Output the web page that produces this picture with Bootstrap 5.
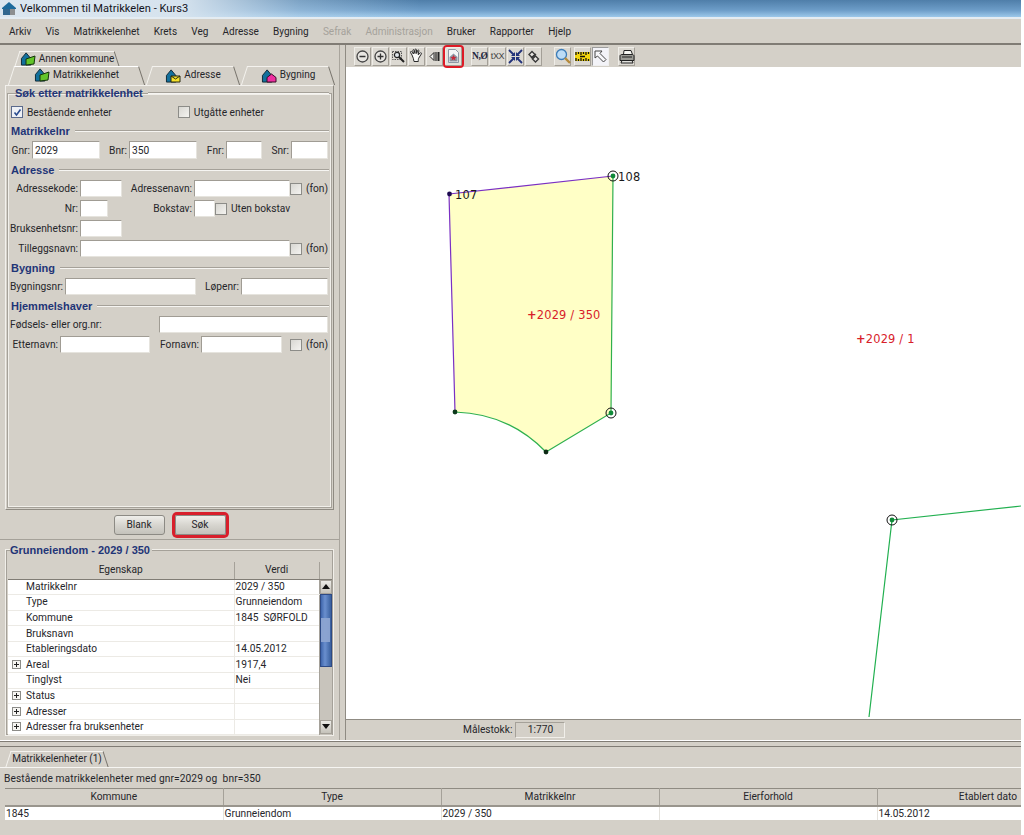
<!DOCTYPE html>
<html lang="no">
<head>
<meta charset="utf-8">
<title>Velkommen til Matrikkelen - Kurs3</title>
<link href="https://cdn.jsdelivr.net/npm/bootstrap@5.3.0/dist/css/bootstrap.min.css" rel="stylesheet">
<style>
  :root { --win: #d4d0c8; --edge: #8f8b83; --head: #1f3577; }
  html, body { height: 100%; margin: 0; background: #fff; overflow: hidden; }
  body { font-family: Roboto, "Liberation Sans", sans-serif; font-size: 10.2px; line-height: 14px; color: #26262a; }
  .app { width: 1021px; height: 835px; background: var(--win); overflow: hidden; }

  .titlebar { height: 19px; padding-left: 2px; font-size: 11.1px; color: #14141c;
    background: linear-gradient(90deg, #dbe6ef 0, #d6e3ee 180px, rgba(190,215,235,.4) 300px, rgba(130,170,205,0) 420px),
                linear-gradient(180deg, #4f7ea9, #6d9dc8 60%, #9cc8ea); border-bottom: 2px solid #e4ecf2; }
  .menubar { height: 26px; padding-left: 9px; gap: 14.2px; border-bottom: 2px solid #807c75; padding-top: 1px; font-size: 10px; }
  .menubar .off { color: #a5a29b; }

  .mainrow { height: 695px; }
  .leftcol { width: 340px; flex: none; padding-top: 5px; border-right: 1px solid #a9a59d; }
  .rightcol { margin-left: 5px; border-left: 1px solid #8f8b83; min-width: 0; }

  .tabrow1 { height: 16px; padding-left: 17px; padding-top: 1px; }
  .tabrow2 { height: 19px; padding-left: 11px; }
  .wintab { position: relative; gap: 3px; justify-content: center; font-size: 10px; }
  .wintab > * { position: relative; z-index: 1; }
  .wintab::before, .wintab::after { content: ""; position: absolute; top: 0; bottom: 0; width: 55%; border-top: 1px solid #f4f2ee; }
  .wintab::before { left: 0; border-left: 1px solid #f4f2ee; transform: skewX(-18deg); }
  .wintab::after { right: 0; border-right: 1px solid #77736c; transform: skewX(18deg); }
  .tab-a { width: 100px; }
  .tab-b { width: 131px; padding-bottom: 2px; }
  .tab-c { width: 88px; margin-left: 7px; padding-bottom: 1px; }
  .tab-b::before, .tab-b::after { background: var(--win); border-top-color: #fff; }

  .pane { height: 425px; margin-left: 5px; width: 329px; border: 1px solid #f2f0ec; border-right-color: #8f8b83; border-bottom-color: #8f8b83; padding: 7px 1px 1px; }
  .gframe { border: 1px solid #a5a199; box-shadow: 0 0 0 1px #f1efea inset; height: 100%; padding: 0 2px; }
  .secthead { height: 14px; margin-top: 4px; gap: 5px; padding-left: 1px; font: bold 11px/14px "Liberation Sans", sans-serif; color: var(--head); }
  .secthead.first { margin-top: -8px; padding-left: 5px; }
  .sectline { flex: 1; height: 2px; border-top: 1px solid #a5a199; border-bottom: 1px solid #f6f5f2; }
  .frow { height: 17px; margin-top: 3px; }
  .frow.tall { height: 18px; }
  .frow.chk { height: 16px; margin-top: 4px; }
  .flabel { text-align: right; padding: 1px 2px 0 0; margin: 0; white-space: nowrap; }
  .flabel.lft { text-align: left; }
  .finput { height: 100%; background: #fff; border: 1px solid #a09c94; border-right-color: #e6e4de; border-bottom-color: #e6e4de; padding: 1px 2px 0; line-height: 15px; }
  .cbx { width: 12px; height: 12px; flex: none; border: 1px solid #8c8c88; background: linear-gradient(135deg, #d8d7d2, #f4f3f0); }
  .cbx.on { position: relative; background: #eef1f6; border-color: #5a6a8c; }
  .fon { margin-left: 4px; padding-top: 1px; }
  .cbx-text { margin-left: 4px; padding-top: 1px; }
  .wd-2 { width: 2px; flex: none; } .wd-8 { width: 8px; flex: none; } .wd-11 { width: 11px; flex: none; }
  .wd-21 { width: 21px; } .wd-22 { width: 22px; } .wd-28 { width: 28px; } .wd-29 { width: 29px; }
  .wd-36 { width: 36px; } .wd-37 { width: 37px; } .wd-42 { width: 42px; } .wd-45 { width: 45px; }
  .wd-50 { width: 50px; } .wd-51 { width: 51px; } .wd-55 { width: 55px; } .wd-68 { width: 68px; }
  .wd-70 { width: 70px; } .wd-72 { width: 72px; } .wd-81 { width: 81px; } .wd-86 { width: 86px; }
  .wd-87 { width: 87px; } .wd-90 { width: 90px; } .wd-96 { width: 96px; } .wd-131 { width: 131px; }
  .wd-149 { width: 149px; } .wd-169 { width: 169px; } .wd-210 { width: 210px; }
  .chk-1 { margin-left: 1px; }
  .chk-2 { margin-left: 66px; }

  .btnbar { height: 30px; gap: 10px; border-bottom: 1px solid #a5a199; }
  .winbtn { width: 51px; height: 20px; padding: 0; font-size: 10.2px; line-height: 16px; color: #26262a; border: 1px solid #8c8a84; border-radius: 3px;
    background: linear-gradient(180deg, #efeeea, #d7d5cf 50%, #c4c2bb); }
  .winbtn.hit { box-shadow: 0 0 0 3px #d81f2b; outline: 0; border-radius: 2px; }

  .dpanel { margin: 9px 0 0 5px; width: 329px; height: 187px; border: 1px solid #f1efea; padding: 0 2px; box-shadow: 0 0 0 1px #a5a199 inset; }
  .dhead { height: 14px; margin-top: -7px; padding-left: 2px; font: bold 11px/14px "Liberation Sans", sans-serif; color: var(--head); }
  .dhead span { background: var(--win); padding-right: 2px; }
  .dtbl { margin: 5px 0 0; width: 324px; table-layout: fixed; border-collapse: collapse; --bs-table-bg: #fff; --bs-table-color: #26262a; }
  .table.dtbl > :not(caption) > * > * { padding: 0 1px; border: 0; font-size: 10.2px; line-height: 14px; white-space: nowrap; box-shadow: none; vertical-align: middle; }
  .table.dtbl > thead > tr > th { height: 17px; font-weight: 400; text-align: center; background: var(--win); border-right: 1px solid #a5a199; border-bottom: 1px solid #807c75; }
  .table.dtbl > thead > tr > th:last-child { border-right: 0; }
  .table.dtbl > tbody > tr > td { height: 15.6px; border-bottom: 1px solid #eceae5; }
  .table.dtbl > tbody > tr > td.namecell { padding-left: 18px; border-right: 1px solid #eceae5; }
  .table.dtbl > tbody > tr > td.sbcell { padding: 0; background: #c8c4bc; border-bottom: 0; border-left: 1px solid #a5a199; vertical-align: top; }
  .col-e { width: 226px; } .col-v { width: 85px; } .col-s { width: 13px; }
  .expander { display: inline-block; position: relative; width: 9px; height: 9px; margin: 0 5px 0 -14px; border: 1px solid #8c8c88; background: #f6f5f2; vertical-align: -1px; }
  .expander::before { content: ""; position: absolute; left: 1px; right: 1px; top: 3px; height: 1px; background: #222; }
  .expander::after { content: ""; position: absolute; top: 1px; bottom: 1px; left: 3px; width: 1px; background: #222; }
  .sbar { height: 154px; }
  .sbtn { height: 14px; flex: none; background: linear-gradient(180deg, #ecebe7, #c5c2ba); border: 1px solid #a5a199; }
  .sbtn svg { display: block; margin: 3px auto 0; }
  .sthumb { height: 73px; flex: none; background: linear-gradient(90deg, #3f66ac, #6a8fce 40%, #39609f); border: 1px solid #2d4a85; }
  .sgrip { width: 9px; height: 24px; background-image: radial-gradient(#8ea6d2 .7px, transparent .8px); background-size: 2px 2px; }

  .toolstrip { height: 22px; flex: none; padding-left: 8px; }
  .tbtn { width: 17px; height: 19px; flex: none; margin-right: 1px; padding: 0; border: 1px solid; border-color: #efede8 #a39f97 #a39f97 #efede8; border-radius: 0; background: #dcd9d2; font-family: "Liberation Serif", serif; color: #22253c; line-height: 16px; }
  .tbtn svg { display: block; margin: 0 auto; }
  .tbtn.hit { position: relative; margin: 0 1px; background: #e4e2dc; box-shadow: 0 0 0 2px #dd1a26; border-radius: 2px; z-index: 1; }
  .tbtn.pressed { background: #f3f3f8; border-color: #9c9c9c #efefef #efefef #9c9c9c; }
  .tsep { width: 8px; flex: none; }
  .txt-no { font-size: 9.5px; font-weight: 700; letter-spacing: -.4px; }
  .txt-xx { font: 9px/16px "Liberation Sans", sans-serif; letter-spacing: -.4px; color: #444; }

  .mapview { flex: 1; background: #fff; min-height: 0; }
  .mapview svg { display: block; }
  .mapnum { font: 11.4px "DejaVu Sans", sans-serif; fill: #1a1a1a; letter-spacing: .2px; }
  .mapred { font: 11.4px "DejaVu Sans", sans-serif; fill: #d8202a; letter-spacing: .2px; }
  .mapplus { font-weight: 700; }
  .statusbar { height: 21px; flex: none; border-top: 1px solid #8f8b83; padding-left: 117px; gap: 3px; }
  .scalebox { width: 50px; height: 16px; text-align: center; border: 1px solid #a5a199; border-right-color: #f1efea; border-bottom-color: #f1efea; }

  .bottompanel { height: 95px; border-top: 1px solid #fff; }
  .bottomrules { height: 6px; border-top: 1px solid #807c75; border-bottom: 1px solid #807c75; }
  .tabbase { height: 17px; margin-top: 4px; padding-left: 8px; border-bottom: 1px solid #f6f5f2; }
  .tab-d { width: 98px; }
  .resulttext { height: 14px; margin: 4px 0 2px 4px; letter-spacing: .1px; }
  .rtbl { margin: 0 0 0 5px; width: 1016px; table-layout: fixed; border-collapse: collapse; --bs-table-bg: #fff; --bs-table-color: #26262a; }
  .table.rtbl > :not(caption) > * > * { padding: 0 1px; border: 0; font-size: 10.2px; line-height: 13px; box-shadow: none; vertical-align: middle; }
  .table.rtbl > thead > tr > th { height: 17px; font-weight: 400; text-align: center; background: var(--win); border-top: 1px solid #8f8b83; border-right: 1px solid #a5a199; border-bottom: 2px solid #99958d; }
  .table.rtbl > thead > tr > th:last-child { border-right: 0; text-align: right; padding-right: 4px; }
  .table.rtbl > tbody > tr > td { height: 14px; border-right: 1px solid #e4e2dd; }
  .col-r1 { width: 218px; } .col-r5 { width: 144px; }
</style>
</head>
<body>

<svg width="0" height="0" class="d-block">
  <defs>
    <symbol id="house" viewBox="0 0 16 16">
      <path d="M1 8 6 2l5 6v7H1z" fill="#12709c" stroke="#0c2432" stroke-width="1"/>
    </symbol>
  </defs>
</svg>

<div class="app d-flex flex-column">

  <div class="titlebar d-flex align-items-center gap-1">
    <svg width="14" height="15" viewBox="0 0 14 15"><path d="M0 7 7 1l7 6v1H0z" fill="#1c6a9c"/><path d="M1 8h12v6H1z" fill="#31678f"/><path d="M8 8h5v6H8z" fill="#8d8f90"/></svg>
    <span>Velkommen til Matrikkelen - Kurs3</span>
  </div>

  <nav class="menubar d-flex align-items-center">
    <span>Arkiv</span><span>Vis</span><span>Matrikkelenhet</span><span>Krets</span><span>Veg</span><span>Adresse</span><span>Bygning</span><span class="off">Sefrak</span><span class="off">Administrasjon</span><span>Bruker</span><span>Rapporter</span><span>Hjelp</span>
  </nav>

  <div class="mainrow d-flex">
    <div class="leftcol d-flex flex-column">

      <div class="tabrow1 d-flex">
        <div class="wintab tab-a d-flex align-items-center">
          <svg width="16" height="15" viewBox="0 0 16 15"><use href="#house"/><path d="m6 8 9-3-1 8-8 1z" fill="#63c52a" stroke="#14340a"/></svg>
          <span>Annen kommune</span>
        </div>
      </div>
      <div class="tabrow2 d-flex">
        <div class="wintab tab-b d-flex align-items-center">
          <svg width="16" height="15" viewBox="0 0 16 15"><use href="#house"/><path d="m6 8 9-3-1 8-8 1z" fill="#63c52a" stroke="#14340a"/></svg>
          <span>Matrikkelenhet</span>
        </div>
        <div class="wintab tab-c d-flex align-items-center">
          <svg width="16" height="15" viewBox="0 0 16 15"><use href="#house"/><path d="M6 8h9v6H6z" fill="#f5e12a" stroke="#2b2b10"/><path d="m6 8 4.500 3L15 8" fill="none" stroke="#2b2b10"/></svg>
          <span>Adresse</span>
        </div>
        <div class="wintab tab-c d-flex align-items-center">
          <svg width="16" height="15" viewBox="0 0 16 15"><use href="#house"/><path d="M6 14V9.500L10.500 6 15 9.500V14z" fill="#ee2fa0" stroke="#3b0a26"/></svg>
          <span>Bygning</span>
        </div>
      </div>

      <div class="pane">
        <div class="gframe">
          <div class="secthead first d-flex align-items-center"><span>Søk etter matrikkelenhet</span><i class="sectline"></i></div>
          <div class="frow chk d-flex align-items-center">
            <span class="cbx on chk-1 d-flex align-items-center justify-content-center"><svg width="9" height="9" viewBox="0 0 9 9"><path d="m1.500 4.500 2 2.500 4-5.500" fill="none" stroke="#2a4c8f" stroke-width="1.600"/></svg></span>
            <span class="cbx-text">Bestående enheter</span>
            <span class="cbx chk-2"></span>
            <span class="cbx-text">Utgåtte enheter</span>
          </div>

          <div class="secthead d-flex align-items-center"><span>Matrikkelnr</span><i class="sectline"></i></div>
          <div class="frow tall d-flex align-items-center">
            <label class="flabel wd-22">Gnr:</label><div class="finput wd-68">2029</div>
            <label class="flabel wd-29">Bnr:</label><div class="finput wd-68">350</div>
            <label class="flabel wd-29">Fnr:</label><div class="finput wd-36"></div>
            <label class="flabel wd-29">Snr:</label><div class="finput wd-37"></div>
          </div>

          <div class="secthead d-flex align-items-center"><span>Adresse</span><i class="sectline"></i></div>
          <div class="frow d-flex align-items-center">
            <label class="flabel wd-70">Adressekode:</label><div class="finput wd-42"></div>
            <label class="flabel wd-72">Adressenavn:</label><div class="finput wd-96"></div>
            <span class="cbx"></span><span class="fon">(fon)</span>
          </div>
          <div class="frow d-flex align-items-center">
            <label class="flabel wd-70">Nr:</label><div class="finput wd-28"></div>
            <label class="flabel wd-86">Bokstav:</label><div class="finput wd-21"></div>
            <span class="cbx"></span><span class="cbx-text">Uten bokstav</span>
          </div>
          <div class="frow d-flex align-items-center">
            <label class="flabel wd-70">Bruksenhetsnr:</label><div class="finput wd-42"></div>
          </div>
          <div class="frow d-flex align-items-center">
            <label class="flabel wd-70">Tilleggsnavn:</label><div class="finput wd-210"></div>
            <span class="cbx"></span><span class="fon">(fon)</span>
          </div>

          <div class="secthead d-flex align-items-center"><span>Bygning</span><i class="sectline"></i></div>
          <div class="frow d-flex align-items-center">
            <label class="flabel wd-55">Bygningsnr:</label><div class="finput wd-131"></div>
            <label class="flabel wd-45">Løpenr:</label><div class="finput wd-87"></div>
          </div>

          <div class="secthead d-flex align-items-center"><span>Hjemmelshaver</span><i class="sectline"></i></div>
          <div class="frow d-flex align-items-center">
            <label class="flabel lft wd-149">Fødsels- eller org.nr:</label><div class="finput wd-169"></div>
          </div>
          <div class="frow d-flex align-items-center">
            <label class="flabel wd-50">Etternavn:</label><div class="finput wd-90"></div>
            <label class="flabel wd-51">Fornavn:</label><div class="finput wd-81"></div>
            <i class="wd-8"></i><span class="cbx"></span><span class="fon">(fon)</span>
          </div>
        </div>
      </div>

      <div class="btnbar d-flex align-items-center justify-content-center">
        <button type="button" class="btn winbtn">Blank</button>
        <button type="button" class="btn winbtn hit">Søk</button>
      </div>

      <div class="dpanel">
        <div class="dhead"><span>Grunneiendom - 2029 / 350</span></div>
        <table class="table dtbl">
          <colgroup><col class="col-e"><col class="col-v"><col class="col-s"></colgroup>
          <thead><tr><th>Egenskap</th><th>Verdi</th><th></th></tr></thead>
          <tbody>
            <tr><td class="namecell">Matrikkelnr</td><td>2029 / 350</td>
              <td class="sbcell" rowspan="10">
                <div class="sbar d-flex flex-column">
                  <div class="sbtn"><svg width="8" height="5" viewBox="0 0 8 5"><path d="M0 5 4 0l4 5z" fill="#111"/></svg></div>
                  <div class="sthumb d-flex align-items-center justify-content-center"><div class="sgrip"></div></div>
                  <div class="flex-grow-1"></div>
                  <div class="sbtn"><svg width="8" height="5" viewBox="0 0 8 5"><path d="M0 0h8L4 5z" fill="#111"/></svg></div>
                </div>
              </td></tr>
            <tr><td class="namecell">Type</td><td>Grunneiendom</td></tr>
            <tr><td class="namecell">Kommune</td><td>1845&nbsp; SØRFOLD</td></tr>
            <tr><td class="namecell">Bruksnavn</td><td></td></tr>
            <tr><td class="namecell">Etableringsdato</td><td>14.05.2012</td></tr>
            <tr><td class="namecell"><span class="expander"></span>Areal</td><td>1917,4</td></tr>
            <tr><td class="namecell">Tinglyst</td><td>Nei</td></tr>
            <tr><td class="namecell"><span class="expander"></span>Status</td><td></td></tr>
            <tr><td class="namecell"><span class="expander"></span>Adresser</td><td></td></tr>
            <tr><td class="namecell"><span class="expander"></span>Adresser fra bruksenheter</td><td></td></tr>
          </tbody>
        </table>
      </div>
    </div>

    <div class="rightcol flex-grow-1 d-flex flex-column">
      <div class="toolstrip d-flex align-items-center">
        <button type="button" class="btn tbtn"><svg width="15" height="15" viewBox="0 0 15 15"><circle cx="7.500" cy="7.500" r="5.500" fill="#e8e6e2" stroke="#454545" stroke-width="1.300"/><path d="M4.500 7.500h6" stroke="#333" stroke-width="1.500"/></svg></button>
        <button type="button" class="btn tbtn"><svg width="15" height="15" viewBox="0 0 15 15"><circle cx="7.500" cy="7.500" r="5.500" fill="#e8e6e2" stroke="#454545" stroke-width="1.300"/><path d="M4.500 7.500h6M7.500 4.500v6" stroke="#333" stroke-width="1.300"/></svg></button>
        <button type="button" class="btn tbtn"><svg width="15" height="15" viewBox="0 0 15 15"><path d="M1.500 2.500h9v8h-9z" fill="none" stroke="#555" stroke-dasharray="1.500 1"/><circle cx="6" cy="6" r="2.600" fill="#dfe5ea" stroke="#222" stroke-width="1.200"/><path d="m8 8 5 5" stroke="#222" stroke-width="2"/></svg></button>
        <button type="button" class="btn tbtn"><svg width="15" height="16" viewBox="0 0 15 16"><path d="M3 7 1.500 4.500c-.5-1 .8-1.500 1.300-.7L4.500 6 3.800 2.500c-.2-1 1.200-1.200 1.400-.2L6 5.500V1.800c0-1 1.400-1 1.400 0l.3 3.700.9-3c.3-1 1.500-.6 1.300.3L9.200 6.800l2-1.800c.8-.7 1.800.2 1.100 1L9.800 10c-.5 1-.5 1.800-.5 3.500H5c-.2-2.500-1-4-2-6.500z" fill="#fbfbfa" stroke="#2a2a2a"/></svg></button>
        <button type="button" class="btn tbtn"><svg width="15" height="15" viewBox="0 0 15 15"><path d="M7 3.500 3 7.500l4 4z" fill="#f4f4f0" stroke="#222"/><path d="M9 3v9" stroke="#222" stroke-width="1.200"/><path d="M11.500 3v9" stroke="#222" stroke-width="2"/></svg></button>
        <button type="button" class="btn tbtn hit"><svg width="15" height="16" viewBox="0 0 15 16"><path d="M2.500 1.500h7l3 3v10h-10z" fill="#f4f5f7" stroke="#8d97a5"/><path d="M3.500 9 7.500 5.500l4 3.500v4.500h-8z" fill="#8c95a3"/><path d="m7.500 7 1 2h2l-1.600 1.400.6 2.100-2-1.200-2 1.200.6-2.100L4.500 9h2z" fill="#c9283a"/></svg></button>
        <i class="tsep"></i>
        <button type="button" class="btn tbtn txt-no">N,Ø</button>
        <button type="button" class="btn tbtn txt-xx">tXX</button>
        <button type="button" class="btn tbtn"><svg width="15" height="15" viewBox="0 0 15 15"><path d="M1 1l5 5M14 1 9 6M1 14l5-5M14 14 9 9" stroke="#22327a" stroke-width="1.800"/><path d="M7 7V3L3 7zM8 7V3l4 4zM7 8v4L3 8zM8 8v4l4-4z" fill="#22327a"/></svg></button>
        <button type="button" class="btn tbtn"><svg width="15" height="15" viewBox="0 0 15 15"><path d="M3 5.500 6 2.500l3 3-3 3zM6.500 10 9.500 7l3 3-3 3z" fill="#e8e6e2" stroke="#3a3a3a" stroke-width="1.400"/><path d="m5 9 5-4" stroke="#3a3a3a" stroke-width="1.400"/></svg></button>
        <i class="wd-11"></i>
        <button type="button" class="btn tbtn"><svg width="16" height="16" viewBox="0 0 16 16"><circle cx="6.500" cy="6.500" r="5" fill="#bcdcf6" stroke="#3c7cb8" stroke-width="1.300"/><path d="m10 10 5 5" stroke="#b58a3c" stroke-width="2.400"/></svg></button>
        <i class="wd-2"></i>
        <button type="button" class="btn tbtn"><svg width="15" height="15" viewBox="0 0 15 15"><path d="M0 3h15v9H0z" fill="#f2d50f"/><path d="M1 3v3M3.500 3v2M6 3v3M8.500 3v2M11 3v3M13.500 3v2M1 12V9M3.500 12v-2M6 12V9M8.500 12v-2M11 12V9M13.500 12v-2M5 7.500h5" stroke="#111" stroke-width="1.300"/></svg></button>
        <button type="button" class="btn tbtn pressed"><svg width="15" height="15" viewBox="0 0 15 15"><path d="M2 2h7L7 4.500l6 6-2.500 2.500-6-6L2 9z" fill="#f7f7fa" stroke="#444"/></svg></button>
        <i class="tsep"></i>
        <button type="button" class="btn tbtn"><svg width="16" height="15" viewBox="0 0 16 15"><path d="M5 1.500h7l1.500 4h-9z" fill="#f6f6f2" stroke="#222"/><path d="M1 7c0-1 1-1.500 2-1.500h10c1 0 2 .5 2 1.500v4.500H1z" fill="#9a9a94" stroke="#222"/><path d="M3 11.500h10l1 2.500H2z" fill="#e2e2de" stroke="#222"/><path d="M3 8h10" stroke="#222"/></svg></button>
      </div>

      <div class="mapview">
        <svg width="675" height="650" viewBox="346 67 675 650">
          <path d="M449 194 613 176 611 413 546 452C520 425 490 413 455 412Z" fill="#ffffc6"/>
          <path d="M449 194 613 176M449 194 455 412" fill="none" stroke="#7a2fc4" stroke-width="1.200"/>
          <path d="M613 176 611 413 546 452C520 425 490 413 455 412" fill="none" stroke="#2fb04e" stroke-width="1.200"/>
          <path d="M1021 506 892 520 869 717" fill="none" stroke="#22b050" stroke-width="1.200"/>
          <circle cx="449.500" cy="194" r="2.400" fill="#1c0a50"/>
          <circle cx="455" cy="412" r="2.400" fill="#0d3a1c"/>
          <circle cx="546" cy="452" r="2.400" fill="#0d2a14"/>
          <g fill="none" stroke="#111">
            <circle cx="613" cy="176" r="5"/>
            <circle cx="611" cy="413" r="5"/>
            <circle cx="892" cy="520" r="5"/>
          </g>
          <circle cx="613" cy="176" r="2.400" fill="#118a3a"/>
          <circle cx="611" cy="413" r="2.400" fill="#118a3a"/>
          <circle cx="892" cy="520" r="2.400" fill="#118a3a"/>
          <text class="mapnum" x="455" y="199">107</text>
          <text class="mapnum" x="618" y="181">108</text>
          <text class="mapred" x="527" y="319"><tspan class="mapplus">+</tspan>2029 / 350</text>
          <text class="mapred" x="856" y="343"><tspan class="mapplus">+</tspan>2029 / 1</text>
        </svg>
      </div>

      <div class="statusbar d-flex align-items-center">
        <span>Målestokk:</span>
        <div class="scalebox">1:770</div>
      </div>
    </div>
  </div>

  <div class="bottompanel">
    <div class="bottomrules"></div>
    <div class="tabbase d-flex">
      <div class="wintab tab-d d-flex align-items-center"><span>Matrikkelenheter (1)</span></div>
    </div>
    <div class="resulttext">Bestående matrikkelenheter med gnr=2029 og&nbsp; bnr=350</div>
    <table class="table rtbl">
      <colgroup><col class="col-r1"><col class="col-r1"><col class="col-r1"><col class="col-r1"><col class="col-r5"></colgroup>
      <thead><tr><th>Kommune</th><th>Type</th><th>Matrikkelnr</th><th>Eierforhold</th><th>Etablert dato</th></tr></thead>
      <tbody><tr><td>1845</td><td>Grunneiendom</td><td>2029 / 350</td><td></td><td>14.05.2012</td></tr></tbody>
    </table>
  </div>
</div>

<script src="https://cdn.jsdelivr.net/npm/bootstrap@5.3.0/dist/js/bootstrap.bundle.min.js"></script>
</body>
</html>
